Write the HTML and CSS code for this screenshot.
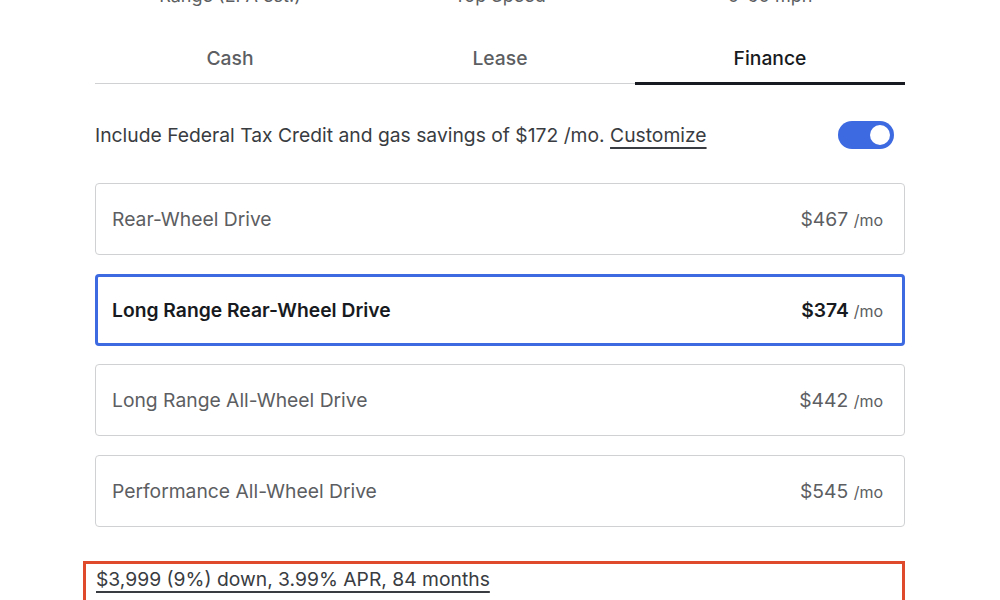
FILE: index.html
```html
<!DOCTYPE html>
<html lang="en">
<head>
<meta charset="utf-8">
<title>Finance</title>
<link rel="stylesheet" href="styles.css">
</head>
<body>
<main class="panel">
  <div class="stats">
    <div class="stat">Range (EPA est.)</div>
    <div class="stat">Top Speed</div>
    <div class="stat">0-60 mph</div>
  </div>
  <nav class="tabs">
    <div class="tab">Cash</div>
    <div class="tab">Lease</div>
    <div class="tab active">Finance</div>
  </nav>
  <div class="credit">
    <p class="credit-text">Include Federal Tax Credit and gas savings of $172 /mo. <a class="link">Customize</a></p>
    <span class="toggle"><span class="knob"></span></span>
  </div>
  <div class="options">
    <div class="option"><span class="name">Rear-Wheel Drive</span><span class="price">$467 <small>/mo</small></span></div>
    <div class="option selected"><span class="name">Long Range Rear-Wheel Drive</span><span class="price">$374 <small>/mo</small></span></div>
    <div class="option"><span class="name">Long Range All-Wheel Drive</span><span class="price">$442 <small>/mo</small></span></div>
    <div class="option"><span class="name">Performance All-Wheel Drive</span><span class="price">$545 <small>/mo</small></span></div>
  </div>
  <div class="terms">
    <a class="link">$3,999 (9%) down, 3.99% APR, 84 months</a>
  </div>
</main>
</body>
</html>
```

FILE: styles.css
```css
* { box-sizing: border-box; }
html, body { margin: 0; padding: 0; background: #fff; overflow: hidden; }
body {
  font-family: Inter, "Noto Sans", "Liberation Sans", sans-serif;
  color: #393c41;
  -webkit-font-smoothing: antialiased;
}
.panel {
  width: 810px;
  margin-left: 95px;
}
.stats {
  display: grid;
  grid-template-columns: repeat(3, 1fr);
  margin-top: -16px;
  height: 24px;
}
.stat {
  text-align: center;
  font-size: 18px;
  line-height: 24px;
  color: #5c5e62;
}
.tabs {
  display: grid;
  grid-template-columns: repeat(3, 1fr);
  margin-top: 32px;
}
.tab {
  text-align: center;
  font-size: 19.3px;
  font-weight: 500;
  color: #5c5e62;
  line-height: 24px;
  padding: 6px 0 13px;
  border-bottom: 1px solid #d0d1d2;
}
.tab.active {
  color: #171a20;
  padding-bottom: 12px;
  border-bottom: 3px solid #171a20;
  margin-bottom: -1px;
}
.credit {
  display: flex;
  align-items: center;
  justify-content: space-between;
  margin: 37px 11px 34px 0;
  height: 28px;
}
.credit-text {
  margin: 0;
  font-size: 19.3px;
  line-height: 24px;
  color: #393c41;
}
.link {
  color: #393c41;
  text-decoration: underline;
  text-decoration-thickness: 1.5px;
  text-underline-offset: 5px;
}
.toggle {
  display: flex;
  align-items: center;
  justify-content: flex-end;
  width: 56px;
  height: 28px;
  border-radius: 14px;
  background: #3e6ae1;
  padding: 4px;
}
.knob {
  width: 20px;
  height: 20px;
  border-radius: 50%;
  background: #fff;
}
.options {
  display: flex;
  flex-direction: column;
  gap: 18.5px;
}
.option {
  display: flex;
  align-items: center;
  justify-content: space-between;
  height: 72px;
  border: 1px solid #d0d1d2;
  border-radius: 4px;
  padding: 0 21px 0 16px;
  font-size: 19.3px;
  color: #5c5e62;
}
.option .price small {
  font-size: 16px;
}
.option.selected {
  border: 3px solid #3e6ae1;
  padding: 0 19px 0 14px;
  color: #171a20;
  font-weight: 600;
}
.option.selected .price small {
  font-weight: 400;
  color: #5c5e62;
}
.terms {
  margin: 34.5px 0 0 -12px;
  width: 822px;
  height: 80px;
  border: 3px solid #e04a2c;
  padding: 3px 0 0 10px;
  font-size: 19.3px;
  line-height: 24px;
}
```
